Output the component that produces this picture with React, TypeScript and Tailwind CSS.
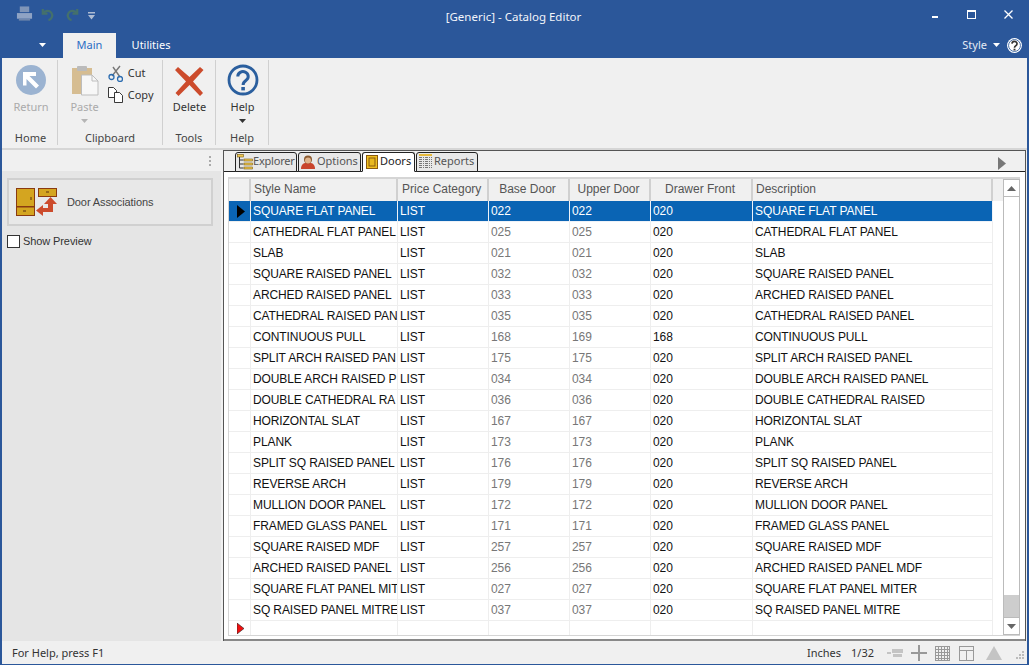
import React from 'react';

// first column shows what fits in the cell, description has the full name
const rows = [
  ['SQUARE FLAT PANEL', '022', '022', '020', 'SQUARE FLAT PANEL'],
  ['CATHEDRAL FLAT PANEL', '025', '025', '020', 'CATHEDRAL FLAT PANEL'],
  ['SLAB', '021', '021', '020', 'SLAB'],
  ['SQUARE RAISED PANEL', '032', '032', '020', 'SQUARE RAISED PANEL'],
  ['ARCHED RAISED PANEL', '033', '033', '020', 'ARCHED RAISED PANEL'],
  ['CATHEDRAL RAISED PAN', '035', '035', '020', 'CATHEDRAL RAISED PANEL'],
  ['CONTINUOUS PULL', '168', '169', '168', 'CONTINUOUS PULL'],
  ['SPLIT ARCH RAISED PAN', '175', '175', '020', 'SPLIT ARCH RAISED PANEL'],
  ['DOUBLE ARCH RAISED P', '034', '034', '020', 'DOUBLE ARCH RAISED PANEL'],
  ['DOUBLE CATHEDRAL RA', '036', '036', '020', 'DOUBLE CATHEDRAL RAISED'],
  ['HORIZONTAL SLAT', '167', '167', '020', 'HORIZONTAL SLAT'],
  ['PLANK', '173', '173', '020', 'PLANK'],
  ['SPLIT SQ RAISED PANEL', '176', '176', '020', 'SPLIT SQ RAISED PANEL'],
  ['REVERSE ARCH', '179', '179', '020', 'REVERSE ARCH'],
  ['MULLION DOOR PANEL', '172', '172', '020', 'MULLION DOOR PANEL'],
  ['FRAMED GLASS PANEL', '171', '171', '020', 'FRAMED GLASS PANEL'],
  ['SQUARE RAISED MDF', '257', '257', '020', 'SQUARE RAISED MDF'],
  ['ARCHED RAISED PANEL', '256', '256', '020', 'ARCHED RAISED PANEL MDF'],
  ['SQUARE FLAT PANEL MIT', '027', '027', '020', 'SQUARE FLAT PANEL MITER'],
  ['SQ RAISED PANEL MITRE', '037', '037', '020', 'SQ RAISED PANEL MITRE'],
];

const gridCols = 'grid grid-cols-[22px_147px_91px_81px_81px_102px_240px_11px]';

function RibbonGroup({ label, width, children }: { label: string; width: string; children: React.ReactNode }) {
  return (
    <div className={`${width} flex flex-col border-r border-[#d0d0d0] mb-[3px]`}>
      <div className="h-[71px] flex justify-center">{children}</div>
      <div className="text-center text-[11px] text-[#444] leading-[14px]">{label}</div>
    </div>
  );
}

function Caret({ color = '#444' }: { color?: string }) {
  return (
    <svg width="7" height="4" viewBox="0 0 7 4">
      <path d="M0 0h7L3.5 4z" fill={color} />
    </svg>
  );
}

function TabIcon({ kind }: { kind: string }) {
  if (kind === 'tree') {
    return (
      <svg width="16" height="16" viewBox="0 0 16 16" fill="none" className="shrink-0">
        <rect x="0.500" y="0.500" width="6" height="2.500" fill="#f0c850" stroke="#7a5a10" strokeWidth="0.6" />
        <path d="M2.500 3v11M2.500 6h4M2.500 10h4M2.500 14h4" stroke="#333" />
        <rect x="7" y="5" width="8.500" height="2" fill="#f0c850" stroke="#7a5a10" strokeWidth="0.6" />
        <rect x="7" y="9" width="8.500" height="2" fill="#f0c850" stroke="#7a5a10" strokeWidth="0.6" />
        <rect x="7" y="13" width="8.500" height="2" fill="#f0c850" stroke="#7a5a10" strokeWidth="0.6" />
      </svg>
    );
  }
  if (kind === 'person') {
    return (
      <svg width="16" height="16" viewBox="0 0 16 16" className="shrink-0">
        <path d="M1 15c0-4 2-5.500 4-6h6c2 .5 4 2 4 6z" fill="#c9452c" />
        <circle cx="8" cy="5.500" r="4" fill="#8a5a30" />
        <ellipse cx="8" cy="6.500" rx="3" ry="3" fill="#e0b48c" />
      </svg>
    );
  }
  if (kind === 'door') {
    return (
      <svg width="12" height="14" viewBox="0 0 12 14" fill="none" className="shrink-0 ml-[2px] mr-[1px]">
        <rect x="0.500" y="0.500" width="11" height="13" fill="#f0c020" stroke="#8a5a10" />
        <rect x="3" y="3" width="6" height="8" fill="#e8b820" stroke="#8a5a10" />
      </svg>
    );
  }
  return (
    <svg width="15" height="15" viewBox="0 0 15 15" fill="none" className="shrink-0">
      <rect x="1" y="0" width="13" height="2" fill="#e6b93c" />
      <path d="M1 3.500h13M1 5.500h13M1 7.500h13M1 9.500h13M1 11.500h13M1 13.500h13M2.500 3v11M5.500 3v11M8.500 3v11M11.500 3v11" stroke="#777" strokeWidth="1" strokeDasharray="1 1" />
    </svg>
  );
}

function DocTab({ label, kind, active, width }: { label: string; kind: string; active?: boolean; width: string }) {
  return (
    <div
      className={`${width} h-[20px] -mb-px mr-px flex items-center pl-[1px] pb-[1px] border border-[#222] rounded-t-[3px] text-[11px] ${
        active ? 'bg-white border-b-white text-[#222] relative z-10' : 'bg-[#e8e8e8] text-[#555]'
      }`}
    >
      <TabIcon kind={kind} />
      <span className={kind === 'tree' ? 'tracking-[-0.2px]' : 'ml-px'}>{label}</span>
    </div>
  );
}

export default function App() {
  return (
    <div className="w-[1029px] h-[665px] overflow-hidden flex flex-col bg-[#2b579a] font-['Noto_Sans','Liberation_Sans',sans-serif] select-none">
      {/* Title bar */}
      <div className="h-[33px] shrink-0 flex items-center text-white relative">
        <div className="flex items-center pl-[16px] pb-[5px]">
          <svg width="17" height="16" viewBox="0 0 18 16">
            <path d="M4 0h10v6H4z" fill="#7f95b8" />
            <path d="M1 7h16v6H1z" fill="#8fa3c4" />
            <path d="M3 13h12v2H3z" fill="#6f86ac" />
          </svg>
          <svg width="15" height="15" viewBox="0 0 16 16" fill="none" stroke="#44706c" strokeWidth="2.400" className="ml-[7px]">
            <path d="M3 2v5h5" />
            <path d="M3.500 7A5 5 0 1 1 9 14" />
          </svg>
          <svg width="15" height="15" viewBox="0 0 16 16" fill="none" stroke="#44706c" strokeWidth="2.400" className="ml-[10px]">
            <path d="M13 2v5H8" />
            <path d="M12.500 7A5 5 0 1 0 7 14" />
          </svg>
          <svg width="7" height="8" viewBox="0 0 7 8" className="ml-[8px] mt-[4px]">
            <path d="M0 0h7v1.500H0zM0 3h7L3.500 7.500z" fill="#aebcd3" />
          </svg>
        </div>
        <div className="absolute left-0 right-0 pr-[2px] text-center text-[11.500px] text-[#f2f5fa]">[Generic] - Catalog Editor</div>
        <div className="ml-auto flex items-center h-full relative pb-[4px]">
          <div className="w-[35px] flex justify-center pt-[5px] pr-[1px]"><div className="w-[6px] h-[2px] bg-white" /></div>
          <div className="w-[36px] flex justify-center"><div className="w-[9px] h-[9px] border border-white border-t-2" /></div>
          <div className="w-[40px] flex justify-center pr-[1px]">
            <svg width="9" height="9" viewBox="0 0 9 9" stroke="white" strokeWidth="1.300"><path d="M0.500 0.500l8 8M8.500 0.500l-8 8" /></svg>
          </div>
        </div>
      </div>

      {/* Ribbon tabs */}
      <div className="h-[25px] shrink-0 flex items-stretch text-white text-[11px] relative">
        <div className="w-[63px] flex justify-center items-center pl-[22px] pb-[1px]"><Caret color="#fff" /></div>
        <div className="w-[53px] bg-[#f0f0f0] text-[#2b6cc4] flex items-center justify-center">Main</div>
        <div className="w-[70px] flex items-center justify-center">Utilities</div>
        <div className="ml-auto flex items-center pr-[6px] gap-[6px]">
          <span className="text-[#e4ebf5]">Style</span>
          <span className="pb-[2px]"><Caret color="#fff" /></span>
          <svg width="17" height="17" viewBox="0 0 16 16" fill="none">
            <circle cx="8" cy="8" r="7" fill="#fff" />
            <circle cx="8" cy="8" r="5.600" stroke="#2b579a" strokeWidth="0.800" />
            <path d="M5.600 6.200a2.400 2.200 0 1 1 3.600 2c-.9.5-1.200 1-1.200 1.800" stroke="#333" strokeWidth="1.600" />
            <path d="M7.100 11h1.800v1.700H7.100z" fill="#333" />
          </svg>
        </div>
      </div>

      {/* Main window body */}
      <div className="flex-1 min-h-0 mx-[2px] flex flex-col bg-[#f0f0f0]">
        {/* Ribbon */}
        <div className="h-[92px] shrink-0 flex pt-[2px] pl-[2px] border-b-2 border-[#d6d6d6] bg-[#f0f0f0]">
          <RibbonGroup label="Home" width="w-[54px]">
            <div className="flex flex-col items-center pt-[4px] pl-[1px]">
              <svg width="32" height="32" viewBox="0 0 32 32">
                <circle cx="16" cy="16" r="15" fill="#9bb3d1" />
                <path d="M8 8h13v4h-6.500L24 21.500 21 24.500 11.500 15v6.500H8z" fill="#fff" />
              </svg>
              <div className="text-[11px] mt-[4px] leading-[14px] text-[#aaa]">Return</div>
            </div>
          </RibbonGroup>
          <RibbonGroup label="Clipboard" width="w-[105px]">
            <div className="flex gap-[9px] pt-[4px] pl-[4px]">
              <div className="flex flex-col items-center">
                <svg width="28" height="32" viewBox="0 0 28 32">
                  <rect x="1" y="4" width="20" height="26" fill="#d6bd92" />
                  <rect x="6" y="2" width="10" height="5" rx="1" fill="#bbb" />
                  <path d="M10.500 11h10.500l6 6v14H10.500z" fill="#f7f7f7" stroke="#bdbdbd" />
                  <path d="M21 11v6h6" fill="none" stroke="#bdbdbd" />
                </svg>
                <div className="text-[11px] mt-[4px] leading-[14px] text-[#aaa]">Paste</div>
                <div className="mt-[5px]"><Caret color="#b5b5b5" /></div>
              </div>
              <div className="flex flex-col gap-[4px] text-[11px] text-[#333] leading-[18px]">
                <div className="flex items-center gap-[5px]">
                  <svg width="15" height="17" viewBox="0 0 15 17" fill="none">
                    <path d="M12 1L4 11M5 2l7 10" stroke="#777" strokeWidth="1.400" />
                    <circle cx="3.500" cy="12" r="2.500" stroke="#2b6cb0" strokeWidth="1.300" />
                    <circle cx="12" cy="14" r="2.500" stroke="#2b6cb0" strokeWidth="1.300" />
                  </svg>
                  <span>Cut</span>
                </div>
                <div className="flex items-center gap-[5px]">
                  <svg width="15" height="16" viewBox="0 0 15 16" fill="white" stroke="#222" strokeWidth="0.900">
                    <path d="M.5.500h5l3 3v7h-8z" />
                    <path d="M6.500 5.500h5l3 3v7h-8z" />
                  </svg>
                  <span>Copy</span>
                </div>
              </div>
            </div>
          </RibbonGroup>
          <RibbonGroup label="Tools" width="w-[53px]">
            <div className="flex flex-col items-center pt-[7px] pl-[1px]">
              <svg width="29" height="29" viewBox="0 0 29 29">
                <path d="M3 0l11.500 10L25 0l3.500 3L18 14.500 28 26l-3 3-10.500-11L3.500 29 .5 26 11 14.500 0 3z" fill="#cc4b2c" />
              </svg>
              <div className="text-[11px] mt-[4px] leading-[14px] text-[#333]">Delete</div>
            </div>
          </RibbonGroup>
          <RibbonGroup label="Help" width="w-[53px]">
            <div className="flex flex-col items-center pt-[4px] pl-[1px]">
              <svg width="32" height="32" viewBox="0 0 32 32" fill="none">
                <circle cx="16" cy="16" r="14" stroke="#2b5f9e" strokeWidth="2.800" />
                <path d="M10.800 12.500a5.200 4.800 0 1 1 8.300 3.800c-2 1.500-3 2.500-3 4.700" stroke="#2b5f9e" strokeWidth="3" />
                <path d="M14.300 23h3.600v3.400h-3.600z" fill="#2b5f9e" />
              </svg>
              <div className="text-[11px] mt-[4px] leading-[14px] text-[#333]">Help</div>
              <div className="mt-[5px]"><Caret color="#333" /></div>
            </div>
          </RibbonGroup>
        </div>

        <div className="flex-1 min-h-0 flex">
          {/* Left panel */}
          <div className="w-[219px] shrink-0 bg-[#e5e5e5] flex flex-col">
            <div className="h-[21px] shrink-0 bg-[#f0f0f0] flex items-center justify-end pr-[10px]">
              <div className="flex flex-col gap-[2px]">
                <div className="w-[2px] h-[2px] bg-[#aaa]" />
                <div className="w-[2px] h-[2px] bg-[#aaa]" />
                <div className="w-[2px] h-[2px] bg-[#aaa]" />
              </div>
            </div>
            <div className="ml-[5px] w-[206px] mt-[7px] h-[48px] border-2 border-[#d0d0d0] bg-[#e8e8e8] flex items-center pl-[7px] gap-[9px] text-[11px] tracking-[-0.1px] text-[#444] font-['Liberation_Sans',sans-serif]">
              <svg width="42" height="28" viewBox="0 0 42 28">
                <rect x="0.500" y="0.500" width="18" height="18" fill="#d4a520" stroke="#8a3a10" />
                <rect x="0.500" y="19" width="18" height="8.500" fill="#d4a520" stroke="#8a3a10" />
                <rect x="22.500" y="0.500" width="18" height="8" fill="#d4a520" stroke="#8a3a10" />
                <path d="M15 9v3M7 23h3M30 4h3" stroke="#5a3010" />
                <path d="M34.500 9L41 16H37V24H27V28L20 22.500 27 17V20H32V16H28z" fill="#cc4b2c" />
              </svg>
              <span>Door Associations</span>
            </div>
            <div className="ml-[5px] mt-[8px] flex items-center gap-[3px] text-[11px] tracking-[-0.1px] text-[#333] leading-[14px] font-['Liberation_Sans',sans-serif]">
              <div className="w-[13px] h-[13px] bg-white border border-[#333]" />
              <span>Show Preview</span>
            </div>
          </div>

          <div className="w-[2px] shrink-0 bg-[#f0f0f0]" />

          {/* Right panel */}
          <div className="flex-1 min-w-0 flex flex-col bg-[#f0f0f0] border-l border-r border-[#555] border-t">
            <div className="h-[21px] shrink-0 flex items-end pl-[11px] border-b border-[#222] relative">
              <DocTab label="Explorer" kind="tree" width="w-[62px]" />
              <DocTab label="Options" kind="person" width="w-[63px]" />
              <DocTab label="Doors" kind="door" active width="w-[53px]" />
              <DocTab label="Reports" kind="tree2" width="w-[62px]" />
              <div className="ml-auto mr-[19px] mb-[1px]">
                <svg width="8" height="13" viewBox="0 0 8 13"><path d="M0 0l8 6.500L0 13z" fill="#777" /></svg>
              </div>
            </div>

            {/* Grid */}
            <div className="flex-1 min-h-0 bg-white pt-[5px] pl-[4px] pr-[5px] pb-[3px] border-b-2 border-[#888] flex flex-col font-['Liberation_Sans',sans-serif]">
              <div className="flex-1 min-h-0 flex border-t-2 border-l border-b border-[#d5d5d5] overflow-hidden">
                <div className="w-[774px] shrink-0">
                  <div className={`${gridCols} h-[22px] bg-[#f0f0f0] text-[12px] text-[#555]`}>
                    <div className="border-r-2 border-[#d0d0d0]" />
                    <div className="border-r-2 border-[#d0d0d0] pl-[3px] leading-[21px]">Style Name</div>
                    <div className="border-r-2 border-[#d0d0d0] pl-[4px] leading-[21px]">Price Category</div>
                    <div className="border-r-2 border-[#d0d0d0] pr-[2px] text-center leading-[21px]">Base Door</div>
                    <div className="border-r-2 border-[#d0d0d0] pr-[2px] text-center leading-[21px]">Upper Door</div>
                    <div className="border-r-2 border-[#d0d0d0] pr-[2px] text-center leading-[21px]">Drawer Front</div>
                    <div className="border-r-2 border-[#d0d0d0] pl-[3px] leading-[21px]">Description</div>
                    <div />
                  </div>
                  {rows.map((r, i) => {
                    const sel = i === 0;
                    const cell = `border-r border-b overflow-hidden whitespace-nowrap pl-[2px] leading-[20px] tracking-[-0.1px] ${
                      sel ? 'border-[#eef2f8] bg-[#0a64b4] text-white' : 'border-[#eeeeee]'
                    }`;
                    return (
                      <div key={i} className={`${gridCols} h-[21px] text-[12px] text-[#111]`}>
                        <div className={`border-r border-b border-[#eeeeee] flex items-center justify-center pl-[3px] ${sel ? 'bg-[#0a64b4]' : ''}`}>
                          {sel && (
                            <svg width="8" height="13" viewBox="0 0 8 13"><path d="M0 0l8 6.500L0 13z" fill="#000" /></svg>
                          )}
                        </div>
                        <div className={cell}>{r[0]}</div>
                        <div className={cell}>LIST</div>
                        <div className={`${cell} ${sel ? '' : 'text-[#777]'}`}>{r[1]}</div>
                        <div className={`${cell} ${sel ? '' : 'text-[#777]'}`}>{r[2]}</div>
                        <div className={cell}>{r[3]}</div>
                        <div className={cell}>{r[4]}</div>
                        <div />
                      </div>
                    );
                  })}
                  <div className={`${gridCols} h-[14px] text-[12px]`}>
                    <div className="border-r border-[#eeeeee] flex items-center pl-[8px]">
                      <svg width="7" height="11" viewBox="0 0 7 11"><path d="M0 0l7 5.500L0 11z" fill="#f01010" stroke="#222" strokeWidth="0.600" /></svg>
                    </div>
                    <div className="border-r border-[#eeeeee]" />
                    <div className="border-r border-[#eeeeee]" />
                    <div className="border-r border-[#eeeeee]" />
                    <div className="border-r border-[#eeeeee]" />
                    <div className="border-r border-[#eeeeee]" />
                    <div className="border-r border-[#eeeeee]" />
                    <div />
                  </div>
                </div>
                <div className="flex-1" />
                <div className="w-[17px] shrink-0 border border-[#bbb] flex flex-col">
                  <div className="h-[17px] border-b border-[#bbb] flex items-center justify-center">
                    <svg width="9" height="5" viewBox="0 0 9 5"><path d="M4.500 0L9 5H0z" fill="#666" /></svg>
                  </div>
                  <div className="flex-1 flex flex-col">
                    <div className="flex-1 bg-white" />
                    <div className="h-[22px] bg-[#cdcdcd]" />
                  </div>
                  <div className="h-[17px] border-t border-[#bbb] flex items-center justify-center">
                    <svg width="9" height="5" viewBox="0 0 9 5"><path d="M0 0h9L4.500 5z" fill="#666" /></svg>
                  </div>
                </div>
              </div>
            </div>
          </div>
          <div className="w-[1px] shrink-0 bg-[#f0f0f0]" />
        </div>

        {/* Status bar */}
        <div className="h-[23px] shrink-0 flex items-center bg-[#f0f0f0] text-[11px] text-[#333] pl-[10px] pt-[1px]">
          <span>For Help, press F1</span>
          <div className="ml-auto flex items-center pr-[2px]">
            <span>Inches</span>
            <span className="ml-[10px]">1/32</span>
            <svg width="16" height="10" viewBox="0 0 16 10" className="ml-[13px]">
              <path d="M0 4h4v2H0zM5 1h11v4H5zM6 6h9v3H6z" fill="#c4c4c4" />
            </svg>
            <svg width="16" height="16" viewBox="0 0 16 16" className="ml-[8px]"><path d="M7 0h2v7h7v2H9v7H7V9H0V7h7z" fill="#999" /></svg>
            <svg width="15" height="15" viewBox="0 0 15 15" className="ml-[8px]" fill="none" stroke="#999">
              <path d="M.5 0v15M3.500 0v15M6.500 0v15M9.500 0v15M12.500 0v15M14.500 0v15M0 .5h15M0 3.500h15M0 6.500h15M0 9.500h15M0 12.500h15M0 14.500h15" />
            </svg>
            <svg width="15" height="15" viewBox="0 0 15 15" className="ml-[9px]" fill="none" stroke="#999">
              <rect x="0.500" y="0.500" width="14" height="14" />
              <path d="M0 4.500h15M7.500 4v11" />
            </svg>
            <svg width="16" height="14" viewBox="0 0 16 14" className="ml-[12px]"><path d="M8 0l8 14H0z" fill="#c4c4c4" /></svg>
            <svg width="9" height="9" viewBox="0 0 9 9" className="ml-[14px] mt-[5px]" fill="#bbb">
              <path d="M6 0h2v2H6zM3 3h2v2H3zM6 3h2v2H6zM0 6h2v2H0zM3 6h2v2H3zM6 6h2v2H6z" />
            </svg>
          </div>
        </div>
      </div>
      <div className="h-[1px] shrink-0" />
    </div>
  );
}
